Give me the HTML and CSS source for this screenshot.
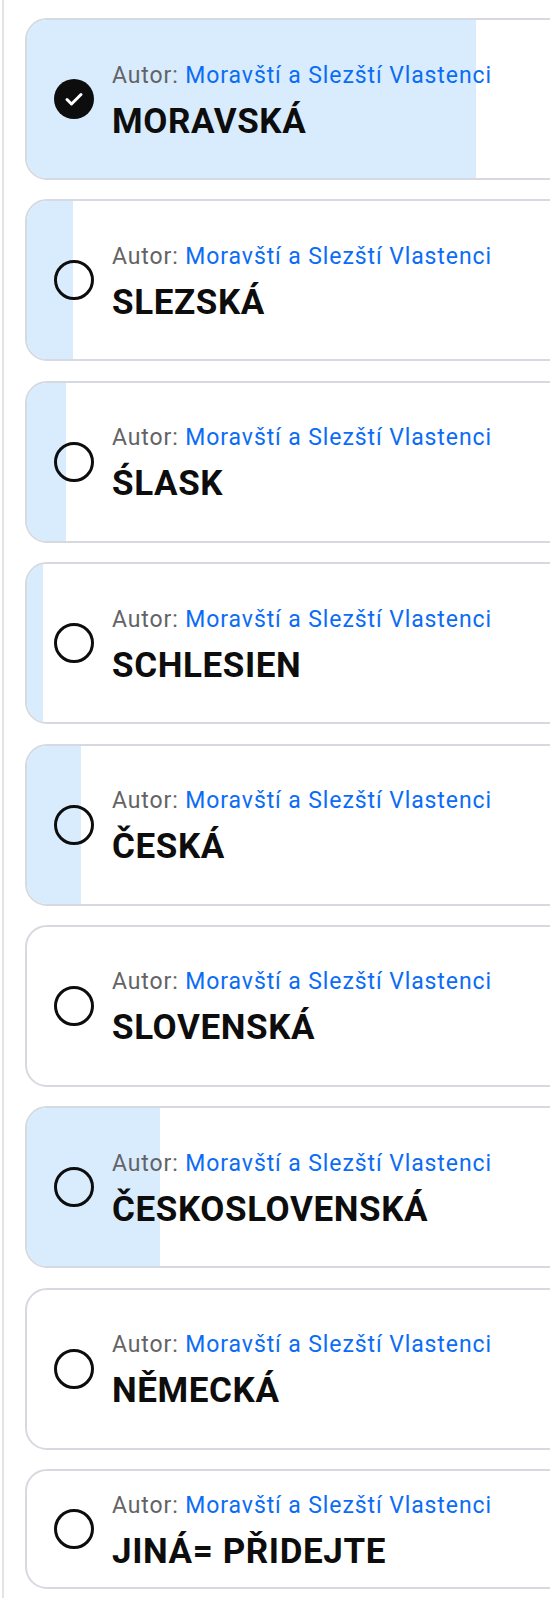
FILE: index.html
```html
<!DOCTYPE html>
<html lang="cs">
<head>
    <meta charset="UTF-8">
    <meta name="viewport" content="width=device-width, initial-scale=1.0">
    <title>Hlasování - národnost</title>
    <link rel="stylesheet" href="styles.css">
</head>
<body>
    <main class="page">
        <ul class="options">
            <li class="option selected">
                <span class="fill" style="width: 449px"></span>
                <span class="radio">
                    <svg viewBox="0 0 40 40" width="40" height="40"><circle cx="20" cy="20" r="20" fill="#0d0d0d"/><polyline points="13,20.5 17.5,25 27,15.5" fill="none" stroke="#fff" stroke-width="3" stroke-linecap="round" stroke-linejoin="round"/></svg>
                </span>
                <div class="text">
                    <p class="author">Autor: <a href="#">Moravští a Slezští Vlastenci</a></p>
                    <p class="title">MORAVSKÁ</p>
                </div>
            </li>
            <li class="option">
                <span class="fill" style="width: 46px"></span>
                <span class="radio">
                    <svg viewBox="0 0 40 40" width="40" height="40"><circle cx="20" cy="20" r="18.5" fill="none" stroke="#0d0d0d" stroke-width="3"/></svg>
                </span>
                <div class="text">
                    <p class="author">Autor: <a href="#">Moravští a Slezští Vlastenci</a></p>
                    <p class="title">SLEZSKÁ</p>
                </div>
            </li>
            <li class="option">
                <span class="fill" style="width: 39px"></span>
                <span class="radio">
                    <svg viewBox="0 0 40 40" width="40" height="40"><circle cx="20" cy="20" r="18.5" fill="none" stroke="#0d0d0d" stroke-width="3"/></svg>
                </span>
                <div class="text">
                    <p class="author">Autor: <a href="#">Moravští a Slezští Vlastenci</a></p>
                    <p class="title">ŚLASK</p>
                </div>
            </li>
            <li class="option">
                <span class="fill" style="width: 16px"></span>
                <span class="radio">
                    <svg viewBox="0 0 40 40" width="40" height="40"><circle cx="20" cy="20" r="18.5" fill="none" stroke="#0d0d0d" stroke-width="3"/></svg>
                </span>
                <div class="text">
                    <p class="author">Autor: <a href="#">Moravští a Slezští Vlastenci</a></p>
                    <p class="title">SCHLESIEN</p>
                </div>
            </li>
            <li class="option">
                <span class="fill" style="width: 54px"></span>
                <span class="radio">
                    <svg viewBox="0 0 40 40" width="40" height="40"><circle cx="20" cy="20" r="18.5" fill="none" stroke="#0d0d0d" stroke-width="3"/></svg>
                </span>
                <div class="text">
                    <p class="author">Autor: <a href="#">Moravští a Slezští Vlastenci</a></p>
                    <p class="title">ČESKÁ</p>
                </div>
            </li>
            <li class="option">
                <span class="radio">
                    <svg viewBox="0 0 40 40" width="40" height="40"><circle cx="20" cy="20" r="18.5" fill="none" stroke="#0d0d0d" stroke-width="3"/></svg>
                </span>
                <div class="text">
                    <p class="author">Autor: <a href="#">Moravští a Slezští Vlastenci</a></p>
                    <p class="title">SLOVENSKÁ</p>
                </div>
            </li>
            <li class="option">
                <span class="fill" style="width: 133px"></span>
                <span class="radio">
                    <svg viewBox="0 0 40 40" width="40" height="40"><circle cx="20" cy="20" r="18.5" fill="none" stroke="#0d0d0d" stroke-width="3"/></svg>
                </span>
                <div class="text">
                    <p class="author">Autor: <a href="#">Moravští a Slezští Vlastenci</a></p>
                    <p class="title">ČESKOSLOVENSKÁ</p>
                </div>
            </li>
            <li class="option">
                <span class="radio">
                    <svg viewBox="0 0 40 40" width="40" height="40"><circle cx="20" cy="20" r="18.5" fill="none" stroke="#0d0d0d" stroke-width="3"/></svg>
                </span>
                <div class="text">
                    <p class="author">Autor: <a href="#">Moravští a Slezští Vlastenci</a></p>
                    <p class="title">NĚMECKÁ</p>
                </div>
            </li>
            <li class="option short">
                <span class="radio">
                    <svg viewBox="0 0 40 40" width="40" height="40"><circle cx="20" cy="20" r="18.5" fill="none" stroke="#0d0d0d" stroke-width="3"/></svg>
                </span>
                <div class="text">
                    <p class="author">Autor: <a href="#">Moravští a Slezští Vlastenci</a></p>
                    <p class="title">JINÁ= PŘIDEJTE</p>
                </div>
            </li>
        </ul>
    </main>
</body>
</html>
```

FILE: styles.css
```css
body {
    margin: 0;
    padding: 0;
    background: #ffffff;
    font-family: 'Roboto', 'Liberation Sans', sans-serif;
    color: #0d0d0d;
    overflow: hidden;
}

.page {
    margin-left: 2px;
    border-left: 2px solid #e4e4e6;
    padding: 18px 0 0 21px;
    min-height: 1598px;
    box-sizing: border-box;
    overflow: hidden;
}

.options {
    list-style: none;
    margin: 0 -40px 0 0;
    padding: 0;
}

.option {
    position: relative;
    display: flex;
    align-items: center;
    gap: 18.5px;
    height: 162px;
    box-sizing: border-box;
    margin-bottom: 19.375px;
    padding-left: 26.5px;
    border: 2px solid #d6dae0;
    border-radius: 22px;
    background: #ffffff;
    overflow: hidden;
}

.option.short {
    height: 120px;
}

.fill {
    position: absolute;
    top: 0;
    bottom: 0;
    left: 0;
    background: #d8ecfd;
}

.radio {
    position: relative;
    flex: none;
    width: 40px;
    height: 40px;
}

.radio svg {
    display: block;
}

.text {
    position: relative;
    padding-top: 5px;
}

.author {
    margin: 0;
    font-size: 23px;
    line-height: 28px;
    letter-spacing: 0.9px;
    color: #636366;
}

.author a {
    color: #0b6cf6;
    text-decoration: none;
}

.title {
    margin: 12px 0 0;
    font-size: 35px;
    line-height: 40px;
    font-weight: bold;
    letter-spacing: 0.6px;
    color: #0d0d0d;
}
```
